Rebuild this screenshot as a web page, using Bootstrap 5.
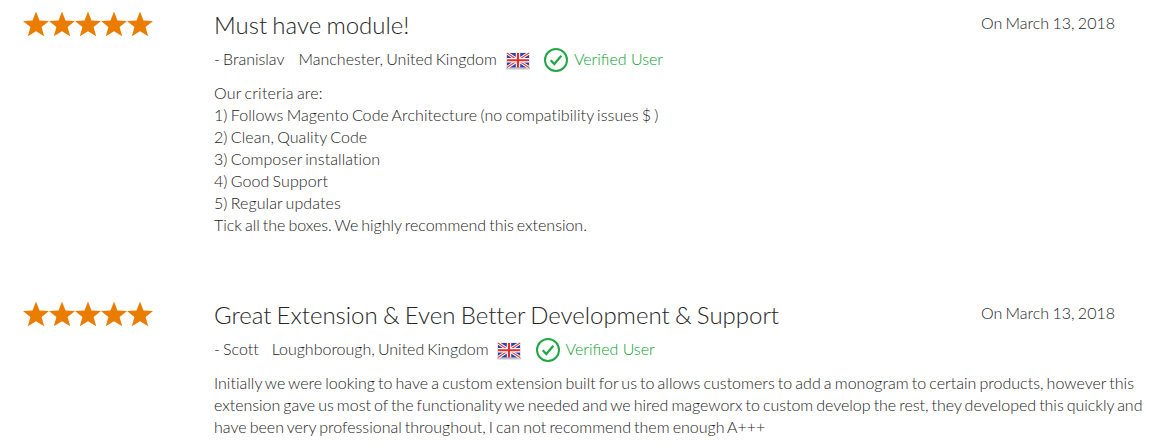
<!DOCTYPE html>
<html lang="en">
<head>
<meta charset="utf-8">
<meta name="viewport" content="width=device-width, initial-scale=1">
<title>Customer reviews</title>
<link rel="stylesheet" href="https://cdn.jsdelivr.net/npm/bootstrap@5.3.0/dist/css/bootstrap.min.css">
<style>
body{font-family:"Lato",sans-serif;font-weight:300;font-size:16px;line-height:22px;color:#1c1c1c;background:#fff;font-variant-ligatures:none;word-spacing:-1.25px}
.review{height:290px;padding:9px 0 0 23px}
.review:last-child{height:158px}
.rating{width:191px;flex:none;padding-top:2px}
.rating svg{display:block}
.review-main{min-width:0}
.review-title{font-size:24px;line-height:32px;font-weight:300;margin:0;color:#262626;letter-spacing:-.02px}
.review-date{margin-right:41px;padding-top:3px;word-spacing:-1px}
.byline{height:24px;margin-top:7px;margin-bottom:10px}
.byline span{padding-bottom:2px}
.byline-name{margin-right:13px}
.branislav .byline-name{margin-right:14px}
.flag{margin:1px 14px 0 7px}
.branislav .flag{margin-left:8px;margin-right:13px}
.byline .verified{color:#0aa034;margin-left:6px;font-variant-ligatures:normal;word-spacing:0}
.criteria{letter-spacing:.08px}
.opening{letter-spacing:.2px}
.closing{letter-spacing:-.02px}
.line-loose{letter-spacing:.015px}
.line-tight{letter-spacing:-.023px}
</style>
</head>
<body>
<svg width="0" height="0" class="position-absolute" aria-hidden="true">
  <defs>
    <path id="star" d="M13 .5 16.5 9.6 26 10 18.6 16 21.2 25.2 13 20.2 4.8 25.2 7.4 16 0 10 9.5 9.6Z"/>
    <symbol id="stars" viewBox="0 0 130 26"><g fill="#ea7c00"><use href="#star"/><use href="#star" x="26"/><use href="#star" x="52"/><use href="#star" x="78"/><use href="#star" x="104"/></g></symbol>
    <symbol id="uk" viewBox="0 0 26 18">
      <rect x="1" y="1.5" width="24" height="16" rx="1" fill="#c3c1c6"/>
      <rect x="1" y="0.5" width="24" height="15.5" rx="1" fill="#e4e2e6"/>
      <rect x="2" y="1" width="22" height="14.5" fill="#2b45a5"/>
      <path d="M2 1 24 15.5M24 1 2 15.5" stroke="#fff" stroke-width="3"/>
      <path d="M2 1 24 15.5M24 1 2 15.5" stroke="#e0433f" stroke-width="1.2"/>
      <path d="M13 1V15.5M2 8.25H24" stroke="#fff" stroke-width="4.4"/>
      <path d="M13 1V15.5M2 8.25H24" stroke="#e32d2d" stroke-width="2.2"/>
    </symbol>
    <symbol id="check" viewBox="0 0 24 24"><g fill="none" stroke="#1ea845"><circle cx="12" cy="12" r="11" stroke-width="2"/><path d="m6.7 12.2 3.6 3.8 7-8.2" stroke-width="2.2"/></g></symbol>
  </defs>
</svg>
<main>
  <article class="review branislav d-flex align-items-start">
    <div class="rating" role="img" aria-label="5 of 5 stars"><svg width="130" height="26"><use href="#stars"/></svg></div>
    <div class="review-main flex-grow-1">
      <div class="d-flex justify-content-between">
        <h2 class="review-title">Must have module!</h2>
        <div class="review-date">On March 13, 2018</div>
      </div>
      <div class="byline d-flex align-items-center text-nowrap">
        <span class="byline-name">- Branislav</span><span>Manchester, United Kingdom</span>
        <svg class="flag" width="26" height="18"><use href="#uk"/></svg>
        <svg width="24" height="24"><use href="#check"/></svg><span class="verified">Verified User</span>
      </div>
      <div class="criteria text-nowrap">
        <div class="opening">Our criteria are:</div>
        <div>1) Follows Magento Code Architecture (no compatibility issues $ )</div>
        <div>2) Clean, Quality Code</div>
        <div>3) Composer installation</div>
        <div>4) Good Support</div>
        <div>5) Regular updates</div>
        <div class="closing">Tick all the boxes. We highly recommend this extension.</div>
      </div>
    </div>
  </article>
  <article class="review d-flex align-items-start">
    <div class="rating" role="img" aria-label="5 of 5 stars"><svg width="130" height="26"><use href="#stars"/></svg></div>
    <div class="review-main flex-grow-1">
      <div class="d-flex justify-content-between">
        <h2 class="review-title">Great Extension &amp; Even Better Development &amp; Support</h2>
        <div class="review-date">On March 13, 2018</div>
      </div>
      <div class="byline d-flex align-items-center text-nowrap">
        <span class="byline-name">- Scott</span><span>Loughborough, United Kingdom</span>
        <svg class="flag" width="26" height="18"><use href="#uk"/></svg>
        <svg width="24" height="24"><use href="#check"/></svg><span class="verified">Verified User</span>
      </div>
      <div class="text-nowrap">
        <div class="line-loose">Initially we were looking to have a custom extension built for us to allows customers to add a monogram to certain products, however this</div>
        <div class="line-tight">extension gave us most of the functionality we needed and we hired mageworx to custom develop the rest, they developed this quickly and</div>
        <div>have been very professional throughout, I can not recommend them enough A+++</div>
      </div>
    </div>
  </article>
</main>
<script src="https://cdn.jsdelivr.net/npm/bootstrap@5.3.0/dist/js/bootstrap.bundle.min.js"></script>
</body>
</html>
